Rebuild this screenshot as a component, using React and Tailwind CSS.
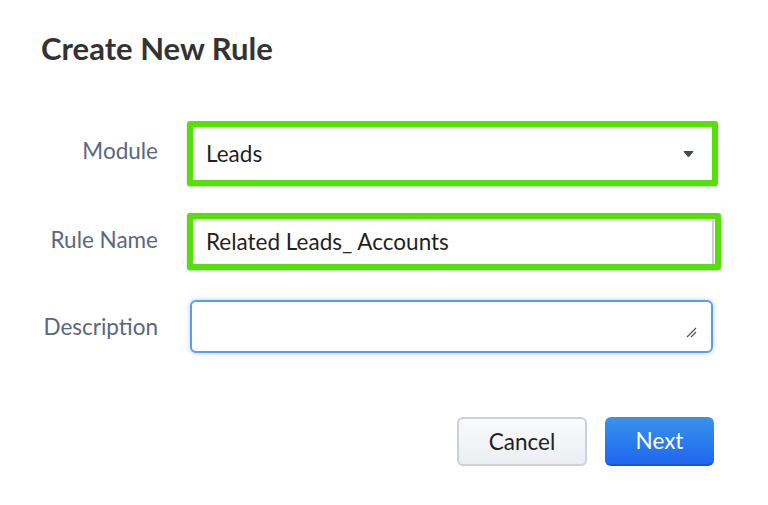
export default function App() {
  const font = { fontFamily: 'Lato, "Open Sans", sans-serif' };
  return (
    <div className="w-[768px] h-[505px] bg-white text-[#222]" style={font}>
      <div className="pl-[41px] pt-[29px]">
        <h1 className="text-[31px] leading-[38px] font-bold text-[#333]">Create New Rule</h1>
      </div>
      <div className="mt-[54px] flex flex-col">
        {/* Module */}
        <div className="flex items-center h-[65px]">
          <div className="w-[158px] text-right text-[22.5px] text-[#5a6781] pb-[5px]">Module</div>
          <div className="ml-[29px] w-[531px] h-[65px] border-[6px] border-[#56e00a] rounded-[3px] bg-white flex items-center pl-[13px] pr-[18px] shadow-[0_1px_2px_rgba(0,0,0,0.25)]">
            <span className="flex-1 text-[22.5px] text-[#1f1f1f]">Leads</span>
            <svg width="11" height="8" viewBox="0 0 11 8">
              <path d="M1 1.5 H10 L5.5 7 Z" fill="#3d4b5c" stroke="#3d4b5c" strokeLinejoin="round" strokeWidth="1" />
            </svg>
          </div>
        </div>
        {/* Rule Name */}
        <div className="flex items-center h-[57px] mt-[27px]">
          <div className="w-[158px] text-right text-[22.5px] text-[#5a6781] pb-[3px]">Rule Name</div>
          <div className="ml-[29px] w-[534px] h-[57px] border-[6px] border-[#56e00a] rounded-[3px] bg-white flex items-center shadow-[0_1px_2px_rgba(0,0,0,0.25)]">
            <span className="flex-1 pl-[13px] text-[22.5px] text-[#1f1f1f]">Related Leads_ Accounts</span>
            <div className="w-[2px] h-full bg-[#cfcfcf] mr-[1px]" />
          </div>
        </div>
        {/* Description */}
        <div className="flex items-center h-[53px] mt-[30px]">
          <div className="w-[158px] text-right text-[22.5px] text-[#5a6781]">Description</div>
          <div className="ml-[32px] w-[523px] h-[53px] border-2 border-[#5c9cf3] rounded-[6px] bg-white shadow-[0_0_5px_rgba(80,150,240,0.45)] flex items-end justify-end pr-[14px] pb-[13px]">
            <svg width="11" height="11" viewBox="0 0 11 11">
              <path d="M1 10 L10 1 M5 10 L10 5" stroke="#555" strokeWidth="1.2" />
            </svg>
          </div>
        </div>
        {/* Buttons */}
        <div className="flex justify-end mt-[64px] pr-[54px] gap-[18px]">
          <button className="w-[130px] h-[49px] rounded-[6px] border-2 border-[#cdd0d8] bg-gradient-to-b from-[#f9fafc] to-[#eceef3] text-[22.5px] text-[#222]">
            Cancel
          </button>
          <button className="w-[109px] h-[49px] rounded-[6px] bg-gradient-to-b from-[#3993ea] to-[#2166f0] border-b-2 border-[#1d55c4] text-[22.5px] text-white">
            Next
          </button>
        </div>
      </div>
    </div>
  );
}
